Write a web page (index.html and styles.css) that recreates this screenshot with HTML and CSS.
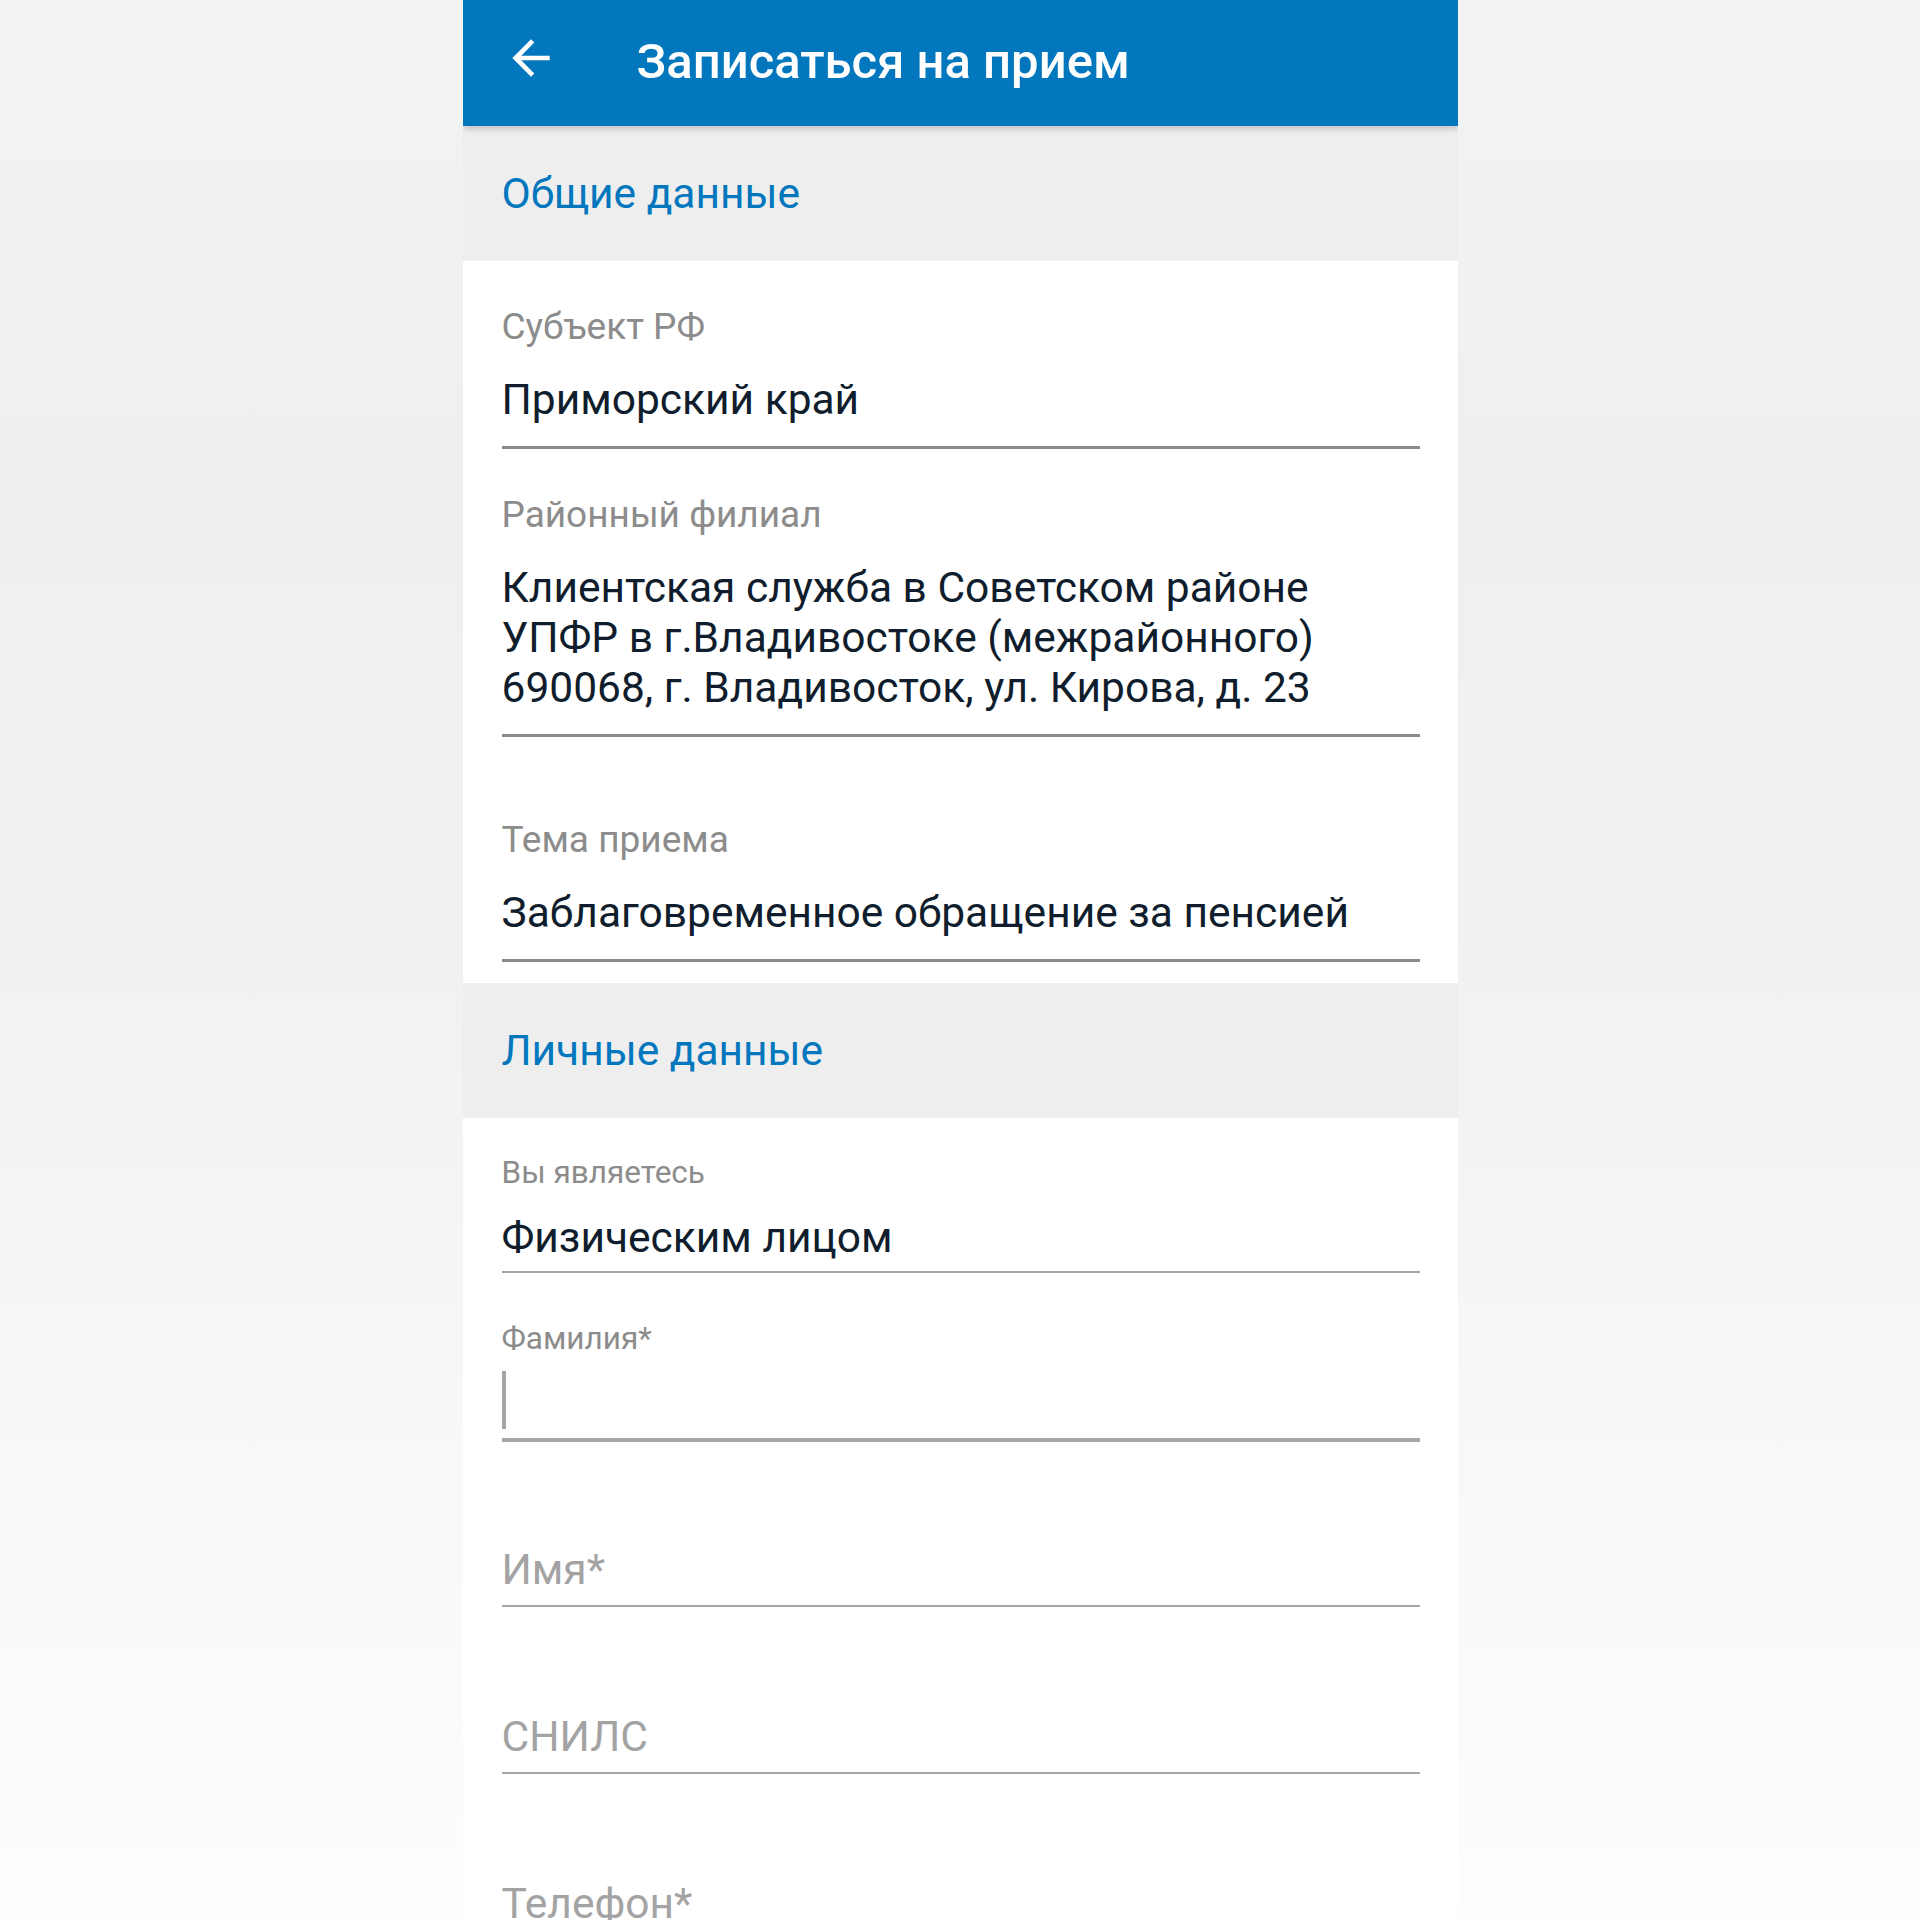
FILE: index.html
```html
<!DOCTYPE html>
<html lang="ru">
<head>
  <meta charset="UTF-8" />
  <title>Записаться на прием</title>
  <meta name="viewport" content="width=device-width, initial-scale=1" />
  <link rel="stylesheet" href="styles.css">
</head>
<body>
  <div class="screen">
    <header class="appbar">
      <svg class="back" viewBox="0 0 24 24">
        <path d="M20 11H7.83l5.59-5.59L12 4l-8 8 8 8 1.41-1.41L7.83 13H20v-2z" fill="#fff"/>
      </svg>
      <h1>Записаться на прием</h1>
    </header>

    <div class="section">Общие данные</div>
    <div class="group">
      <div class="field">
        <div class="label">Субъект РФ</div>
        <div class="value">Приморский край</div>
      </div>
      <div class="field">
        <div class="label">Районный филиал</div>
        <div class="value">Клиентская служба в Советском районе<br>УПФР в г.Владивостоке (межрайонного)<br>690068, г. Владивосток, ул. Кирова, д. 23</div>
      </div>
      <div class="field field-gap">
        <div class="label">Тема приема</div>
        <div class="value">Заблаговременное обращение за пенсией</div>
      </div>
    </div>

    <div class="section">Личные данные</div>
    <div class="group personal">
      <div class="field small">
        <div class="label">Вы являетесь</div>
        <div class="value">Физическим лицом</div>
      </div>
      <div class="field small focused">
        <div class="label">Фамилия*</div>
        <div class="input"><span class="cursor"></span></div>
      </div>
      <div class="field empty">
        <div class="placeholder">Имя*</div>
      </div>
      <div class="field empty">
        <div class="placeholder">СНИЛС</div>
      </div>
      <div class="field empty">
        <div class="placeholder">Телефон*</div>
      </div>
    </div>
  </div>
</body>
</html>
```

FILE: styles.css
```css
:root {
  --blue: #0277bd;
  --band: #eeeeee;
  --label: #8c8c8c;
  --text: #0f1d2c;
  --line: #8a8a8a;
  --line-light: #a6a6a6;
}

body {
  margin: 0;
  height: 1920px;
  overflow: hidden;
  font-family: Roboto, "Noto Sans", sans-serif;
  background: linear-gradient(180deg, #f2f3f3 0%, #eeeff1 25%, #f1f2f2 55%, #f7f8f8 75%, #fdfdfd 100%);
  display: flex;
  justify-content: center;
}

.screen {
  width: 995px;
  height: 1920px;
  background: #fff;
  overflow: hidden;
}

.appbar {
  position: relative;
  z-index: 1;
  height: 126px;
  background: var(--blue);
  display: flex;
  align-items: center;
  padding-left: 40px;
  box-shadow: 0 3px 6px rgba(0, 0, 0, 0.18);
}

.back {
  display: block;
  width: 56px;
  height: 56px;
  margin-top: -10px;
}

.appbar h1 {
  margin: -4px 0 0 78px;
  color: #fff;
  font-size: 49px;
  font-weight: 500;
}

.section {
  height: 135px;
  background: var(--band);
  color: var(--blue);
  font-size: 42.5px;
  line-height: 135px;
  padding-left: 39px;
}

.group {
  padding: 46px 38px 21px 39px;
}

.group.personal {
  padding-top: 37px;
}

.field {
  border-bottom: 3px solid var(--line);
  padding-bottom: 21px;
  margin-bottom: 46px;
}

.field:last-child {
  margin-bottom: 0;
}

.field-gap {
  margin-top: 83px;
}

.label {
  color: var(--label);
  font-size: 37px;
  line-height: 40px;
}

.value {
  margin-top: 28px;
  color: var(--text);
  font-size: 42.5px;
  line-height: 50px;
}

.small {
  border-bottom: 2px solid var(--line-light);
  padding-bottom: 8px;
  margin-bottom: 48px;
}

.small .label {
  font-size: 31.5px;
  line-height: 36px;
}

.small .value {
  margin-top: 22px;
}

.focused {
  border-bottom: 4px solid var(--line-light);
  padding-bottom: 0;
  margin-bottom: 103px;
}

.input {
  margin-top: 14px;
  height: 67px;
}

.cursor {
  display: block;
  width: 4px;
  height: 58px;
  margin-top: 4px;
  background: var(--line-light);
}

.empty {
  border-bottom: 2px solid var(--line-light);
  padding-bottom: 10px;
  margin-bottom: 105px;
}

.placeholder {
  color: #a3a3a3;
  font-size: 42.5px;
  line-height: 50px;
}
```
